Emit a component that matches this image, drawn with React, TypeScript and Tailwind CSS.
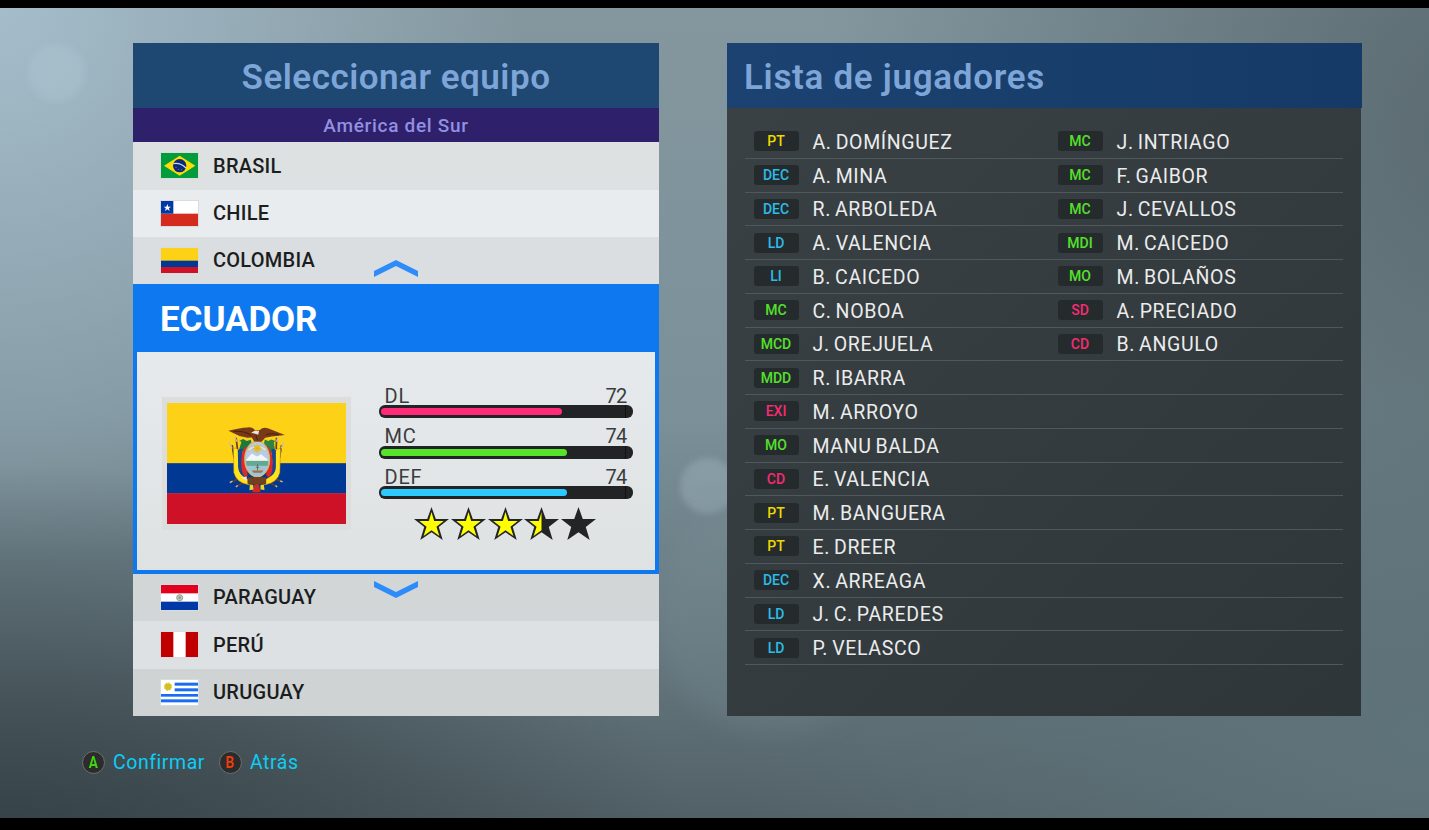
import type { ReactNode } from 'react';
import clsx from 'clsx';

type Player = { pos: string; name: string };

const posColor: Record<string, string> = {
  PT: 'text-[#f0d800]',
  DEC: 'text-[#2cbcea]',
  LD: 'text-[#2cbcea]',
  LI: 'text-[#2cbcea]',
  MC: 'text-[#55e02c]',
  MCD: 'text-[#55e02c]',
  MDD: 'text-[#55e02c]',
  MDI: 'text-[#55e02c]',
  MO: 'text-[#55e02c]',
  EXI: 'text-[#f52b72]',
  CD: 'text-[#f52b72]',
  SD: 'text-[#f52b72]',
};

const starters: Player[] = [
  { pos: 'PT', name: 'A. DOMÍNGUEZ' },
  { pos: 'DEC', name: 'A. MINA' },
  { pos: 'DEC', name: 'R. ARBOLEDA' },
  { pos: 'LD', name: 'A. VALENCIA' },
  { pos: 'LI', name: 'B. CAICEDO' },
  { pos: 'MC', name: 'C. NOBOA' },
  { pos: 'MCD', name: 'J. OREJUELA' },
  { pos: 'MDD', name: 'R. IBARRA' },
  { pos: 'EXI', name: 'M. ARROYO' },
  { pos: 'MO', name: 'MANU BALDA' },
  { pos: 'CD', name: 'E. VALENCIA' },
  { pos: 'PT', name: 'M. BANGUERA' },
  { pos: 'PT', name: 'E. DREER' },
  { pos: 'DEC', name: 'X. ARREAGA' },
  { pos: 'LD', name: 'J. C. PAREDES' },
  { pos: 'LD', name: 'P. VELASCO' },
];

const reserves: Player[] = [
  { pos: 'MC', name: 'J. INTRIAGO' },
  { pos: 'MC', name: 'F. GAIBOR' },
  { pos: 'MC', name: 'J. CEVALLOS' },
  { pos: 'MDI', name: 'M. CAICEDO' },
  { pos: 'MO', name: 'M. BOLAÑOS' },
  { pos: 'SD', name: 'A. PRECIADO' },
  { pos: 'CD', name: 'B. ANGULO' },
];

const stats = [
  { label: 'DL', value: 72, color: 'bg-[#ff2a78]' },
  { label: 'MC', value: 74, color: 'bg-[#55e42b]' },
  { label: 'DEF', value: 74, color: 'bg-[#2ccaff]' },
];

const STAR = 'M52 0 L65 36 L105 36 L74 60 L86 99 L52 76 L18 99 L30 60 L-1 36 L39 36 Z';
const STAR_INNER = 'M52 15 L60 42 L89 42 L67 59 L76 87 L52 70 L28 87 L37 59 L15 42 L44 42 Z';

function FlagBox({ children }: { children: ReactNode }) {
  return (
    <svg viewBox="0 0 111 75" preserveAspectRatio="none" className="h-[25px] w-[37px] shrink-0 outline outline-[#d9dcdc]">
      {children}
    </svg>
  );
}

function BrasilFlag() {
  return (
    <FlagBox>
      <rect width="111" height="75" fill="#029c3c" />
      <path d="M9 38 L56 8 L103 38 L56 68 Z" fill="#fddc02" />
      <circle cx="56" cy="38" r="20" fill="#0b2a78" />
      <path d="M37 32 Q58 28 75 45" fill="none" stroke="#c9dbe0" strokeWidth="4" />
      <g fill="#8fa3c8">
        <circle cx="45" cy="43" r="1.5" />
        <circle cx="53" cy="49" r="1.5" />
        <circle cx="62" cy="50" r="1.5" />
      </g>
    </FlagBox>
  );
}

function ChileFlag() {
  return (
    <FlagBox>
      <rect width="111" height="75" fill="#fff" />
      <rect y="38" width="111" height="37" fill="#d52b1e" />
      <rect width="37" height="38" fill="#0039a6" />
      <path d="M19 9 L22 17 L30 17 L23.500 22 L26 30 L19 25 L12 30 L14.500 22 L8 17 L16 17 Z" fill="#fff" />
    </FlagBox>
  );
}

function ColombiaFlag() {
  return (
    <FlagBox>
      <rect width="111" height="75" fill="#fcd116" />
      <rect y="38" width="111" height="19" fill="#003893" />
      <rect y="57" width="111" height="18" fill="#ce1126" />
    </FlagBox>
  );
}

function ParaguayFlag() {
  return (
    <FlagBox>
      <rect width="111" height="75" fill="#fff" />
      <rect width="111" height="25" fill="#e2001f" />
      <rect y="50" width="111" height="25" fill="#0038a8" />
      <circle cx="56" cy="38" r="9" fill="#c9d0c0" stroke="#8a9a8c" strokeWidth="3" />
      <circle cx="56" cy="38" r="4" fill="#8c9a78" />
    </FlagBox>
  );
}

function PeruFlag() {
  return (
    <FlagBox>
      <rect width="111" height="75" fill="#fff" />
      <rect width="37" height="75" fill="#c00000" />
      <rect x="74" width="37" height="75" fill="#c00000" />
    </FlagBox>
  );
}

function UruguayFlag() {
  return (
    <FlagBox>
      <rect width="111" height="75" fill="#fff" />
      <g fill="#1a6cf5">
        <rect x="41" y="8" width="70" height="9" />
        <rect x="41" y="25" width="70" height="9" />
        <rect y="42" width="111" height="8" />
        <rect y="58" width="111" height="9" />
      </g>
      <circle cx="21" cy="20" r="10" fill="#d3c21c" />
      <circle cx="21" cy="20" r="11" fill="none" stroke="#d9bd30" strokeWidth="3" strokeDasharray="5 3.600" />
    </FlagBox>
  );
}

function EcuadorFlag() {
  return (
    <svg viewBox="51 54 536 362" preserveAspectRatio="none" className="h-[121px] w-[179px]">
      <rect x="51" y="54" width="536" height="181" fill="#fcd116" />
      <rect x="51" y="234" width="536" height="91" fill="#003893" />
      <rect x="51" y="324" width="536" height="92" fill="#ce1126" />
      {/* pikes and axes */}
      <g stroke="#6b3a22" strokeWidth="5" fill="none">
        <path d="M246 180 L252 218 M258 158 L262 192 M394 180 L388 218 M379 158 L378 192" />
        <path d="M290 270 L240 292 M300 280 L258 305 M350 270 L396 290 M340 280 L380 305" />
      </g>
      <g stroke="#c9bfa8" strokeWidth="4">
        <path d="M237 172 L246 190 M254 154 L260 170 M400 172 L393 190 M384 154 L379 170" />
        <path d="M239 292 L247 288 M257 305 L263 301 M397 290 L390 287 M381 305 L376 301" />
      </g>
      {/* laurel and palm */}
      <path d="M266 196 L274 170 L267 168 L279 162 L290 168 L302 164 L305 180 L290 205 Z" fill="#1d7a3d" />
      <path d="M375 200 L371 172 L376 168 L363 163 L354 168 L344 163 L340 180 L356 208 Z" fill="#2d8440" />
      {/* draped flags */}
      <path d="M250 190 Q262 186 266 200 L268 255 Q274 276 303 286 L296 299 Q258 292 251 262 Z" fill="#ffe21a" stroke="#a88512" strokeWidth="1.500" />
      <path d="M391 192 Q380 188 375 200 L373 255 Q366 276 337 286 L344 299 Q382 292 389 262 Z" fill="#ffe21a" stroke="#a88512" strokeWidth="1.500" />
      <path d="M263 194 L277 190 L275 250 L290 279 Q266 270 264 247 Z" fill="#174693" />
      <path d="M377 194 L364 190 L367 250 L350 279 Q376 270 377 247 Z" fill="#174693" />
      <path d="M275 208 Q280 190 290 182 L292 270 L286 278 Q268 257 275 208 Z" fill="#dd2a24" />
      <path d="M365 208 Q360 190 351 182 L348 270 L356 278 Q373 257 365 208 Z" fill="#dd2a24" />
      {/* shield */}
      <ellipse cx="321" cy="222" rx="37" ry="53" fill="#b9cce7" stroke="#d0b878" strokeWidth="4" />
      <clipPath id="shield">
        <ellipse cx="321" cy="222" rx="34" ry="50" />
      </clipPath>
      <g clipPath="url(#shield)">
        <path d="M284 228 L305 205 L320 214 L333 207 L360 230 Z" fill="#f4f5f5" />
        <rect x="284" y="227" width="74" height="16" fill="#65a891" />
        <rect x="284" y="242" width="74" height="34" fill="#9cc6d4" />
        <path d="M305 256 L340 256 L334 263 L310 263 Z" fill="#a5723b" />
        <path d="M322 237 V256 M317 246 H327" stroke="#666c67" strokeWidth="3" />
        <path d="M292 191 Q321 171 350 191 L347 199 Q321 181 295 199 Z" fill="#dfe1d3" stroke="#9b9b7c" />
        <circle cx="321" cy="190" r="10" fill="#e8c32c" />
        <path d="M321 176 V204 M307 190 H335 M311 180 L331 200 M331 180 L311 200" stroke="#d8b224" strokeWidth="2" />
      </g>
      {/* fasces */}
      <rect x="292" y="276" width="56" height="21" rx="3" fill="#70401f" />
      <path d="M313 297 H326 L331 321 H306 Z" fill="#cf2a22" />
      <path d="M299 298 L309 299 L310 313 L298 315 Z M331 299 L341 298 L343 314 L331 313 Z" fill="#f3d51d" />
      <path d="M272 277 L290 274 L289 286 Z" fill="#e3e6ea" />
      {/* condor */}
      <path
        d="M235 137 Q270 128 292 127 Q307 125 315 136 L329 135 Q338 124 355 130 Q378 139 404 150 L365 154 L345 158 L334 170 L312 169 L305 157 L292 158 L268 153 Z"
        fill="#773917"
      />
      <path d="M250 139 Q285 137 302 151 M348 149 Q368 143 386 149 M317 151 L322 165" stroke="#4f240e" strokeWidth="3" fill="none" />
      <path d="M303 143 L313 137 L327 137 L324 149 L315 146 Z" fill="#e8e3da" />
    </svg>
  );
}

interface TeamRowProps {
  name: string;
  flag: ReactNode;
  className: string;
}

function TeamRow({ name, flag, className }: TeamRowProps) {
  return (
    <div className={clsx('flex items-center gap-[15px] pb-px pl-7 text-xl font-medium tracking-[0.25px] text-[#1b1d1e]', className)}>
      {flag}
      <span>{name}</span>
    </div>
  );
}

function Chevron({ down }: { down?: boolean }) {
  return (
    <svg
      viewBox="0 0 132 52"
      preserveAspectRatio="none"
      className={clsx('absolute left-[241px] z-10 h-[17px] w-[44px]', down ? 'top-[7px]' : 'bottom-[7px]')}
    >
      <path d={down ? 'M0 0 L66 34 L132 0 V18 L66 52 L0 18 Z' : 'M0 34 L66 0 L132 34 V52 L66 18 L0 52 Z'} fill="#2d8cf9" />
    </svg>
  );
}

function StatBar({ label, value, color }: { label: string; value: number; color: string }) {
  return (
    <div className="h-[40.5px]">
      <div className="flex h-[19px] items-center justify-between px-[6px] text-xl tracking-[0.8px] text-[#3a3d3f]">
        <span>{label}</span>
        <span className="tracking-[-0.8px]">{value}</span>
      </div>
      <div className="flex h-[13px] items-center rounded-[6px] bg-[#212324] pr-[7px] pl-[2px]">
        <div className="h-full flex-1 border-r border-[#111] py-[3px]">
          <div className={clsx('h-full rounded-[4px]', color)} style={{ width: `${value + 2.4}%` }} />
        </div>
      </div>
    </div>
  );
}

function Star({ fill }: { fill: number }) {
  return (
    <svg viewBox="-1 0 106 99" preserveAspectRatio="none" className="h-[33px] w-[35px]">
      <path d={STAR} fill="#222425" />
      {fill === 1 && <path d={STAR_INNER} fill="#ffff00" />}
      {fill === 0.5 && <path d="M52 15 L44 42 L15 42 L37 59 L28 87 L52 70 Z" fill="#ffff00" />}
    </svg>
  );
}

function PlayerCell({ player }: { player: Player }) {
  return (
    <div className="flex w-[304px] shrink-0 items-center pl-[8.5px]">
      <span
        className={clsx(
          'flex h-5 w-[45px] items-center justify-center rounded-[3px] bg-[#252b2d] text-sm font-medium',
          posColor[player.pos],
        )}
      >
        {player.pos}
      </span>
      <span className="pt-[2px] pl-[14px] text-[19.5px] tracking-[0.65px] text-[#ececec] [word-spacing:-1.5px]">{player.name}</span>
    </div>
  );
}

function PadButton({ letter, label, color }: { letter: string; label: string; color: string }) {
  return (
    <div className="flex items-center gap-2">
      <span
        className={clsx(
          'flex size-[23px] items-center justify-center rounded-full border border-[#6c7071] bg-[#2c2c2c] text-base font-bold',
          color,
        )}
      >
        <span className="scale-x-[0.85]">{letter}</span>
      </span>
      <span className="text-[19.5px] tracking-[0.55px] text-[#0ccdf5]">{label}</span>
    </div>
  );
}

function Backdrop() {
  return (
    <div className="absolute inset-0 overflow-hidden bg-[linear-gradient(180deg,#84979f_0%,#7b9099_50%,#66787f_78%,#526167_100%)]">
      <div className="absolute inset-0 bg-[radial-gradient(ellipse_520px_560px_at_0%_0%,#a5bdcb_0%,#a5bdcb00_100%)]" />
      <div className="absolute inset-0 bg-[radial-gradient(ellipse_700px_420px_at_0%_108%,#323e43_0%,#323e4300_100%)]" />
      <div className="absolute inset-0 bg-[radial-gradient(ellipse_640px_900px_at_102%_15%,#5b6b71_0%,#5b6b7100_100%)]" />
      <div className="absolute inset-0 bg-[radial-gradient(ellipse_700px_360px_at_100%_90%,#5f737a_0%,#5f737a00_100%)]" />
      <div className="absolute top-[36px] left-[28px] size-[58px] rounded-full bg-[#b9cfda]/25 blur-[3px]" />
      <div className="absolute top-[450px] left-[680px] size-[56px] rounded-full bg-[#a9bec8]/35 blur-[3px]" />
      <div className="absolute top-[490px] left-[655px] size-[235px] rounded-full bg-[#7c8f98]/25 blur-[12px]" />
    </div>
  );
}

export default function App() {
  return (
    <div className="relative flex h-[830px] w-[1429px] flex-col overflow-hidden border-t-8 border-b-[12px] border-black font-['Roboto','Liberation_Sans',sans-serif]">
      <Backdrop />

      <main className="relative flex gap-[68px] pt-[35px] pl-[133px]">
        <section className="flex h-[673px] w-[526px] flex-col">
          <h1 className="flex h-[65px] items-center justify-center bg-[#1e4772] pt-[5px] text-[35px] font-semibold tracking-[0.5px] text-[#7da5d7]">
            Seleccionar equipo
          </h1>
          <h2 className="flex h-[34px] items-center justify-center bg-[#2e206b] pt-[2px] text-[19px] font-medium tracking-[0.7px] text-[#9290e0]">
            América del Sur
          </h2>

          <div className="relative">
            <TeamRow name="BRASIL" flag={<BrasilFlag />} className="h-12 bg-[#dde1e2]" />
            <TeamRow name="CHILE" flag={<ChileFlag />} className="h-[47px] bg-[#e8ecee]" />
            <TeamRow name="COLOMBIA" flag={<ColombiaFlag />} className="h-[47px] bg-[#dadee0]" />
            <Chevron />
          </div>

          <div className="h-[290px] border-4 border-t-0 border-[#0d78ef] bg-[#0d78ef]">
            <div className="flex h-[68px] items-center pt-1 pl-[23px] text-[35px] font-bold tracking-[-0.1px] text-white">ECUADOR</div>
            <div className="flex h-[218px] bg-linear-to-b from-[#e6eaec] to-[#dfe2e3]">
              <div className="mt-[45px] ml-[25px] flex h-[133px] w-[189px] items-center justify-center bg-[#dcdddd]">
                <EcuadorFlag />
              </div>
              <div className="mt-[34px] ml-[27.5px] w-[254px]">
                {stats.map((s) => (
                  <StatBar key={s.label} {...s} />
                ))}
                <div className="-mt-px flex gap-[1.8px] pl-[35.5px]">
                  {[1, 1, 1, 0.5, 0].map((fill, i) => (
                    <Star key={i} fill={fill} />
                  ))}
                </div>
              </div>
            </div>
          </div>

          <div className="relative">
            <Chevron down />
            <TeamRow name="PARAGUAY" flag={<ParaguayFlag />} className="h-[47px] bg-[#d2d6d7]" />
            <TeamRow name="PERÚ" flag={<PeruFlag />} className="h-12 bg-[#dde1e3]" />
            <TeamRow name="URUGUAY" flag={<UruguayFlag />} className="h-[47px] bg-[#d0d3d4]" />
          </div>
        </section>

        <section className="flex h-[673px] w-[635px] flex-col">
          <h1 className="flex h-[65px] items-center bg-linear-to-r from-[#1b4270] to-[#153a68] pt-[5px] pl-[17px] text-[35px] font-semibold tracking-[0.7px] text-[#7da5d7]">
            Lista de jugadores
          </h1>
          <div className="mr-px flex-1 bg-linear-to-br from-[#394145] to-[#2e3639] px-[18px] pt-[17px]">
            {starters.map((player, i) => (
              <div key={player.name} className="flex h-[33.75px] border-b border-[#50585c]">
                <PlayerCell player={player} />
                {reserves[i] && <PlayerCell player={reserves[i]} />}
              </div>
            ))}
          </div>
        </section>
      </main>

      <footer className="relative mt-8 flex gap-[14px] pl-[82px]">
        <PadButton letter="A" label="Confirmar" color="text-[#3fd413]" />
        <PadButton letter="B" label="Atrás" color="text-[#f03c0c]" />
      </footer>
    </div>
  );
}
